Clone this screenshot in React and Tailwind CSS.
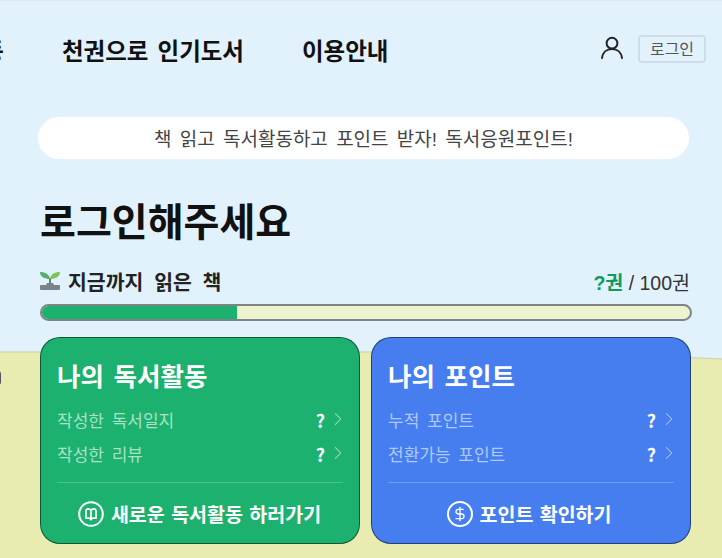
import React from 'react';
import { ChevronRight, DollarSign } from 'lucide-react';

// -------------------------
// Small drawings
// -------------------------
const UserIcon = () => (
  <svg width="24" height="24" viewBox="0 0 24 24" fill="none" stroke="#222" strokeWidth="2" strokeLinecap="round">
    <circle cx="12" cy="8.200" r="5.400" />
    <path d="M2 23c.6-5.600 4.600-9 10-9s9.400 3.400 10 9" />
  </svg>
);

const Sprout = () => (
  <svg width="20" height="20" viewBox="0 0 20 20">
    <path d="M10 13V7" stroke="#3f6b50" strokeWidth="1.600" />
    <path d="M10 8C9 3 5 1 0 1c0 5 5 7 10 7z" fill="#4fb06d" />
    <path d="M10 8c1-5 4-7 10-7 0 5-5 7-10 7z" fill="#7cc659" />
    <path d="M7 12h6l1 2h5a1 1 0 0 1 1 1v3a1 1 0 0 1-1 1H1a1 1 0 0 1-1-1v-3a1 1 0 0 1 1-1h5z" fill="#7b828c" />
  </svg>
);

const BookCircle = () => (
  <svg width="26" height="26" viewBox="0 0 26 26" fill="none" stroke="#fff" strokeWidth="2">
    <circle cx="13" cy="13" r="11.800" />
    <path strokeWidth="1.700" d="M13 9.500c-.6-1.100-1.500-1.700-2.700-1.700-1.300 0-2.300.9-2.300 2.200v7.200h2.800c1 0 1.800.4 2.200 1.200.4-.8 1.200-1.200 2.200-1.200H18V10c0-1.300-1-2.200-2.300-2.200-1.200 0-2.100.6-2.700 1.700zM13 9.500v8.900" />
  </svg>
);

const DollarCircle = () => (
  <div className="w-[26px] h-[26px] rounded-full border-2 border-white flex items-center justify-center">
    <DollarSign className="w-[16px] h-[16px]" strokeWidth={2} />
  </div>
);

// -------------------------
// Cards
// -------------------------
const StatRow = ({ label, labelColor }) => (
  <div className="flex items-center justify-between h-[34px]">
    <span className={`pt-[4px] text-[17px] [word-spacing:3px] ${labelColor}`}>{label}</span>
    <span className="flex items-center gap-[2px] text-white">
      <b className="text-[18px] font-bold font-['Noto_Sans_CJK_KR',sans-serif]">?</b>
      <ChevronRight className={`w-[22px] h-[22px] -mr-[6px] -mt-[2px] ${labelColor}`} strokeWidth={1.100} />
    </span>
  </div>
);

const Card = ({ title, rows, action, icon, color, labelColor, lineColor, actionClass }) => (
  <div className={`flex-1 h-[207px] rounded-[20px] border border-black/50 px-[16px] pt-[22px] ${color}`}>
    <h2 className="text-[25.500px] leading-[34px] font-bold text-white [word-spacing:2.500px]">{title}</h2>
    <div className="mt-[9px]">
      {rows.map((r) => (
        <StatRow key={r} label={r} labelColor={labelColor} />
      ))}
    </div>
    <div className={`mt-[11px] h-px ${lineColor}`} />
    <div className={`flex items-center justify-center gap-[7px] h-[60px] pt-[2px] text-white text-[19.500px] font-bold [word-spacing:1px] ${actionClass}`}>
      {icon}
      <span className="pt-[4px]">{action}</span>
    </div>
  </div>
);

// -------------------------
// Main App Component
// -------------------------
export default function App() {
  return (
    <div className="relative w-[722px] h-[558px] overflow-hidden bg-[#e2f2fd] text-[#111] font-['Liberation_Sans','Noto_Sans_CJK_KR',sans-serif]">
      {/* wave behind the cards */}
      <svg className="absolute left-0 top-[350px]" width="722" height="208" viewBox="0 0 722 208">
        <path d="M0 2H420Q600 3 722 9V208H0z" fill="#e8ecb0" />
        <path d="M0 2H420Q600 3 722 9" fill="none" stroke="#c9cfa8" strokeWidth="1" />
      </svg>
      <div className="absolute -left-[5px] top-[371px] w-[6px] h-[14px] rounded-full bg-[#555]" />

      <div className="relative">
        <div className="h-px bg-[#dfe6f0]" />
        <header className="flex items-center h-[99px] pb-[3px]">
          <nav className="flex items-center gap-[58px] -ml-[42px] pt-[7px] text-[23.500px] font-bold [word-spacing:2.500px]">
            <span className="w-[46px] overflow-hidden whitespace-nowrap text-right">활동</span>
            <span>천권으로 인기도서</span>
            <span>이용안내</span>
          </nav>
          <div className="ml-auto mr-[16px] flex items-center gap-[14px]">
            <span className="-mt-[5px]"><UserIcon /></span>
            <button className="w-[68px] h-[28px] pt-[2px] rounded-[4px] border-2 border-[#d0dde8] text-[16px] leading-none text-[#555]">
              로그인
            </button>
          </div>
        </header>

        <main className="pl-[40px] pr-[30px]">
          <div className="-ml-[2px] mr-[3px] mt-[17px] h-[42px] pt-[4px] rounded-full bg-white flex items-center justify-center text-[19px] text-[#444] [word-spacing:3px]">
            책 읽고 독서활동하고 포인트 받자! 독서응원포인트!
          </div>

          <h1 className="mt-[39px] text-[39px] leading-[50px] font-bold">로그인해주세요</h1>

          <div className="mt-[19px] flex items-center justify-between h-[28px]">
            <div className="flex items-center gap-[8px] text-[20.500px] font-bold text-[#222] [word-spacing:5px]">
              <Sprout />
              <span className="pt-[4px]">지금까지 읽은 책</span>
            </div>
            <div className="pt-[5px] text-[19.500px] mr-[2px] text-[#333]">
              <b className="font-bold text-[#109a62]">?권</b> / 100권
            </div>
          </div>

          <div className="mt-[9px] w-[652px] h-[17px] rounded-full border-2 border-[#7f8587] bg-[#edf2cf] overflow-hidden">
            <div className="w-[195px] h-full bg-[#1db16f]" />
          </div>

          <div className="mt-[16px] flex gap-[11px] w-[651px]">
            <Card
              title="나의 독서활동"
              rows={['작성한 독서일지', '작성한 리뷰']}
              action="새로운 독서활동 하러가기"
              icon={<BookCircle />}
              color="bg-[#1db16f]"
              labelColor="text-[#a6e2c4]"
              lineColor="bg-[#4cc18c]"
              actionClass="pr-[1px]"
            />
            <Card
              title="나의 포인트"
              rows={['누적 포인트', '전환가능 포인트']}
              action="포인트 확인하기"
              icon={<DollarCircle />}
              color="bg-[#467ef0]"
              labelColor="text-[#b0c8f8]"
              lineColor="bg-[#6f9bf4]"
              actionClass="pr-[4px]"
            />
          </div>
        </main>
      </div>
    </div>
  );
}
